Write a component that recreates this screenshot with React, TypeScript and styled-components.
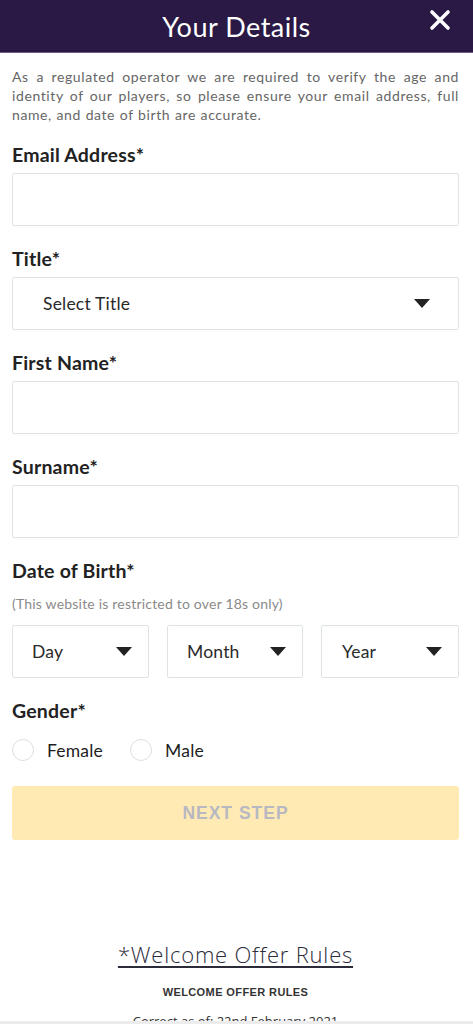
import React, { useState } from 'react';
import styled, { createGlobalStyle } from 'styled-components';

const GlobalStyle = createGlobalStyle`
  * { box-sizing: border-box; }
  body {
    margin: 0;
    background: #fff;
    font-family: Lato, "Noto Sans", sans-serif;
  }
`;

const Page = styled.div`
  width: 473px;
  min-height: 1024px;
`;

const Header = styled.header`
  height: 53px;
  background: #2a1945;
  border-bottom: 1px solid #6b5b86;
  display: flex;
  align-items: center;
  justify-content: center;
  position: relative;
`;

const HeaderTitle = styled.h1`
  margin: 0;
  color: #fff;
  font-size: 27px;
  font-weight: 400;
  letter-spacing: 0.5px;
`;

const CloseButton = styled.button`
  position: absolute;
  right: 22px;
  top: 9px;
  width: 22px;
  height: 22px;
  padding: 0;
  border: 0;
  background: none;
  cursor: pointer;
  display: flex;
`;

const Content = styled.main`
  padding: 14px 14px 0 12px;
`;

const Intro = styled.p`
  margin: 0 0 20px;
  font-size: 14px;
  line-height: 19px;
  letter-spacing: 0.6px;
  word-spacing: 0.5px;
  color: #666;
  text-align: justify;
`;

const Field = styled.div`
  margin-bottom: 22px;
`;

const Label = styled.label<{ $gap?: number }>`
  display: block;
  font-size: 19.5px;
  line-height: 22px;
  font-weight: 700;
  letter-spacing: 0.2px;
  color: #222;
  margin-bottom: ${(p) => p.$gap ?? 7}px;
`;

const Note = styled.div`
  font-size: 14px;
  line-height: 18px;
  letter-spacing: 0.2px;
  color: #8a8a8a;
  margin-bottom: 12px;
`;

const TextInput = styled.input`
  display: block;
  width: 100%;
  height: 53px;
  border: 1px solid #dde3e6;
  border-radius: 2px;
  background: #fff;
  font: inherit;
  font-size: 17px;
  padding: 0 14px;
  outline: none;
`;

const SelectBox = styled.div<{ $pad: number; $arrowGap: number }>`
  height: 53px;
  border: 1px solid #dde3e6;
  border-radius: 2px;
  background: #fff;
  display: flex;
  align-items: center;
  justify-content: space-between;
  padding: 0 ${(p) => p.$arrowGap}px 0 ${(p) => p.$pad}px;
  font-size: 17.5px;
  letter-spacing: 0.2px;
  color: #2a2a2a;
  cursor: pointer;
`;

const Arrow = styled.span`
  width: 0;
  height: 0;
  border-left: 8px solid transparent;
  border-right: 8px solid transparent;
  border-top: 9px solid #222;
`;

const DobRow = styled.div`
  display: grid;
  grid-template-columns: 137px 136px 138px;
  column-gap: 18px;
`;

const RadioRow = styled.div`
  display: flex;
  align-items: center;
  margin-top: 17px;
`;

const RadioOption = styled.label`
  display: flex;
  align-items: center;
  font-size: 17.5px;
  letter-spacing: 0.2px;
  color: #1e1e1e;
  margin-right: 27px;
  cursor: pointer;
`;

const RadioCircle = styled.span<{ $on: boolean }>`
  width: 22px;
  height: 22px;
  border-radius: 50%;
  border: 1px solid #dcdfe2;
  background: ${(p) => (p.$on ? '#2a1945' : '#fff')};
  margin-right: 13px;
`;

const NextButton = styled.button`
  display: block;
  width: 100%;
  height: 54px;
  margin-top: 25px;
  border: 0;
  border-radius: 3px;
  background: #feeab2;
  color: #b8b8c3;
  font-family: "Liberation Sans", Arial, sans-serif;
  font-weight: 700;
  font-size: 17.5px;
  letter-spacing: 1px;
  cursor: default;
`;

const Rules = styled.section`
  margin-top: 99px;
  text-align: center;
  color: #333;
`;

const RulesLink = styled.a`
  font-family: "Open Sans", sans-serif;
  font-size: 22px;
  font-weight: 300;
  color: #2b2b3a;
  text-decoration: underline;
  text-underline-offset: 3px;
  letter-spacing: 0.8px;
`;

const RulesHeading = styled.div`
  margin-top: 17px;
  font-family: "Liberation Sans", Arial, sans-serif;
  font-size: 11px;
  font-weight: 700;
  letter-spacing: 0.4px;
`;

const RulesDate = styled.div`
  margin-top: 14px;
  font-family: "Open Sans", sans-serif;
  font-size: 13px;
`;

const BottomBar = styled.div`
  position: fixed;
  left: 0;
  right: 0;
  bottom: 0;
  height: 3px;
  background: #ececec;
`;

export default function App() {
  const [gender, setGender] = useState<string | null>(null);

  return (
    <Page>
      <GlobalStyle />
      <Header>
        <HeaderTitle>Your Details</HeaderTitle>
        <CloseButton aria-label="Close">
          <svg width="22" height="22" viewBox="0 0 22 22">
            <path d="M3 3 L19 19 M19 3 L3 19" stroke="#fff" strokeWidth="3.6" strokeLinecap="round" />
          </svg>
        </CloseButton>
      </Header>
      <Content>
        <Intro>
          As a regulated operator we are required to verify the age and identity of our players, so please
          ensure your email address, full name, and date of birth are accurate.
        </Intro>

        <Field>
          <Label>Email Address*</Label>
          <TextInput type="email" />
        </Field>

        <Field>
          <Label>Title*</Label>
          <SelectBox $pad={30} $arrowGap={28}>
            Select Title
            <Arrow />
          </SelectBox>
        </Field>

        <Field>
          <Label>First Name*</Label>
          <TextInput type="text" />
        </Field>

        <Field>
          <Label>Surname*</Label>
          <TextInput type="text" />
        </Field>

        <Field>
          <Label $gap={13}>Date of Birth*</Label>
          <Note>(This website is restricted to over 18s only)</Note>
          <DobRow>
            <SelectBox $pad={19} $arrowGap={16}>
              Day
              <Arrow />
            </SelectBox>
            <SelectBox $pad={19} $arrowGap={16}>
              Month
              <Arrow />
            </SelectBox>
            <SelectBox $pad={20} $arrowGap={16}>
              Year
              <Arrow />
            </SelectBox>
          </DobRow>
        </Field>

        <div>
          <Label $gap={0}>Gender*</Label>
          <RadioRow>
            {['Female', 'Male'].map((g) => (
              <RadioOption key={g} onClick={() => setGender(g)}>
                <RadioCircle $on={gender === g} />
                {g}
              </RadioOption>
            ))}
          </RadioRow>
        </div>

        <NextButton>NEXT STEP</NextButton>

        <Rules>
          <RulesLink href="#">*Welcome Offer Rules</RulesLink>
          <RulesHeading>WELCOME OFFER RULES</RulesHeading>
          <RulesDate>Correct as of: 22nd February 2021</RulesDate>
        </Rules>
      </Content>
      <BottomBar />
    </Page>
  );
}
